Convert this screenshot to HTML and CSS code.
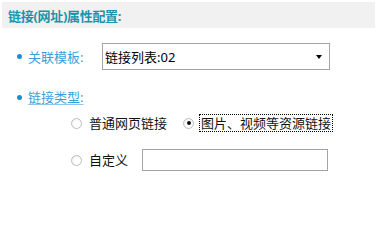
FILE: index.html
```html
<!DOCTYPE html>
<html lang="zh">
<head>
<meta charset="utf-8">
<link rel="stylesheet" href="styles.css">
</head>
<body>
<div class="panel">
  <div class="header"><span class="header-text">链接(网址)属性配置:</span></div>
  <div class="row row-tpl">
    <span class="bullet"></span>
    <span class="label">关联模板:</span>
    <div class="select">
      <span class="select-text">链接列表:02</span>
      <span class="arrow"></span>
    </div>
  </div>
  <div class="row row-type">
    <span class="bullet"></span>
    <span class="label label-u">链接类型:</span>
  </div>
  <div class="opts">
    <div class="opt-row opt-row1">
      <span class="radio"></span>
      <span class="opt-text">普通网页链接</span>
      <span class="radio radio-on"></span>
      <span class="opt-text opt-focus">图片、视频等资源链接</span>
    </div>
    <div class="opt-row opt-row2">
      <span class="radio"></span>
      <span class="opt-text">自定义</span>
      <span class="text-input"></span>
    </div>
  </div>
</div>
</body>
</html>
```
FILE: styles.css
```css
html, body {
  margin: 0;
  padding: 0;
  background: #fff;
}
body {
  font-family: "Noto Sans", "Noto Sans CJK SC", sans-serif;
  font-size: 13px;
  color: #111;
}
.panel {
  padding: 2px;
  width: 373px;
}
.header {
  height: 26px;
  box-sizing: border-box;
  padding: 3px 0 0 6px;
  line-height: 23px;
  background: #f1f1f1;
}
.header-text {
  font-weight: bold;
  color: #1a93ad;
  font-size: 13px;
  letter-spacing: -0.3px;
}
.row {
  display: flex;
  align-items: center;
  padding-left: 15px;
}
.row-tpl {
  margin-top: 15px;
  height: 27px;
}
.row-type {
  margin-top: 17px;
  height: 20px;
}
.bullet {
  width: 5px;
  height: 5px;
  border-radius: 50%;
  background: #1a8fd0;
  margin-right: 6px;
}
.label {
  color: #3a9fd8;
  font-size: 13px;
  line-height: 18px;
}
.row-tpl .label {
  width: 74px;
}
.label-u {
  text-decoration: underline;
  text-decoration-color: #8fc4e6;
  text-underline-offset: 2px;
}
.select {
  height: 25px;
  border: 1px solid #a3a3a3;
  display: flex;
  align-items: center;
  justify-content: space-between;
  padding: 0 7px 0 2px;
  width: 217px;
}
.select-text {
  color: #000;
  font-size: 13px;
}
.arrow {
  width: 0;
  height: 0;
  border-left: 3px solid transparent;
  border-right: 3px solid transparent;
  border-top: 4px solid #000;
}
.opts {
  padding-left: 69px;
}
.opt-row {
  display: flex;
  align-items: center;
}
.opt-row1 {
  margin-top: 6px;
  height: 20px;
}
.opt-row2 {
  margin-top: 16px;
  height: 22px;
}
.radio {
  width: 9px;
  height: 9px;
  border-radius: 50%;
  border: 1px solid #bdbdbd;
  background: radial-gradient(circle at 60% 60%, #ffffff 40%, #e6e6e6 100%);
  position: relative;
  margin-right: 7px;
  flex: none;
}
.radio-on::after {
  content: "";
  position: absolute;
  left: 2.5px;
  top: 2.5px;
  width: 4px;
  height: 4px;
  border-radius: 50%;
  background: #111;
}
.opt-text {
  color: #111;
  font-size: 13px;
  line-height: 16px;
  margin-right: 16px;
}
.opt-focus {
  outline: 1px dotted #000;
  padding: 0 1px;
  margin-left: -1px;
}
.text-input {
  width: 184px;
  height: 20px;
  border: 1px solid #a3a3a3;
  margin-left: -2px;
}
```
